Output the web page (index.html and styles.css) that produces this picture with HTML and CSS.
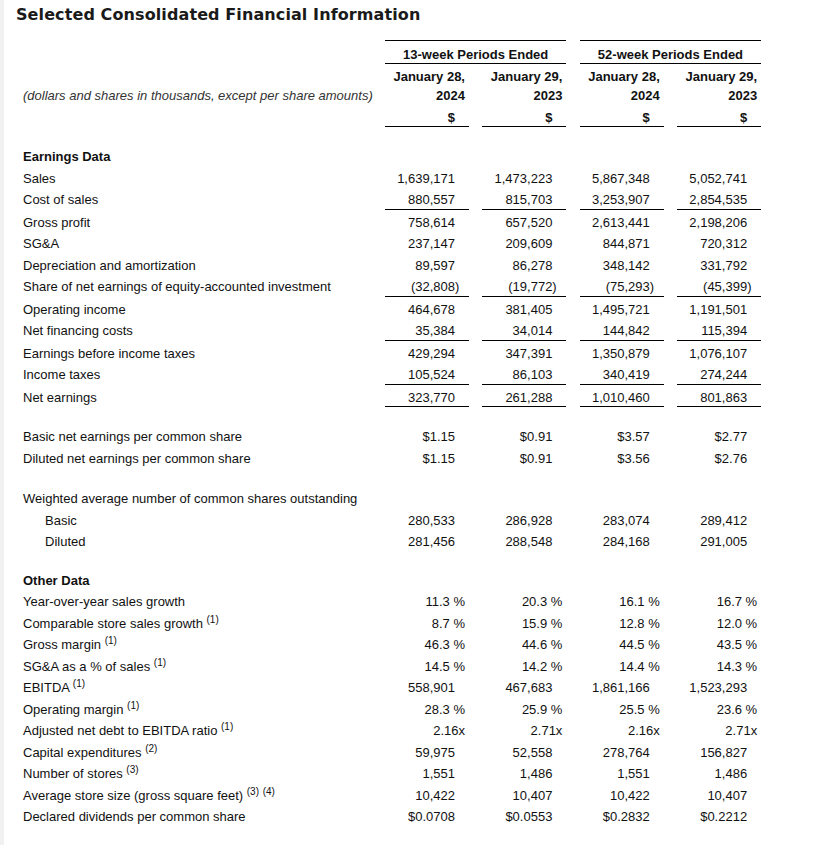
FILE: index.html
```html
<!DOCTYPE html>
<html lang="en">
<head>
<meta charset="utf-8">
<title>Selected Consolidated Financial Information</title>
<link rel="stylesheet" href="styles.css">
</head>
<body>
<div class="page">
  <h1 class="title">Selected Consolidated Financial Information</h1>
  <div class="fin">
    <div class="row head-a">
      <div class="lbl"></div>
      <div class="group g1">13-week Periods Ended</div>
      <div class="group g2">52-week Periods Ended</div>
    </div>
    <div class="row head-b">
      <div class="lbl"></div>
      <div class="hd">January 28,</div>
      <div class="hd">January 29,</div>
      <div class="hd">January 28,</div>
      <div class="hd">January 29,</div>
    </div>
    <div class="row head-c">
      <div class="lbl note">(dollars and shares in thousands, except per share amounts)</div>
      <div class="hd">2024</div>
      <div class="hd">2023</div>
      <div class="hd">2024</div>
      <div class="hd">2023</div>
    </div>
    <div class="row head-d">
      <div class="lbl"></div>
      <div class="cur">$</div>
      <div class="cur">$</div>
      <div class="cur">$</div>
      <div class="cur">$</div>
    </div>

    <div class="spacer short"></div>

    <div class="row"><div class="lbl sec">Earnings Data</div></div>
    <div class="row"><div class="lbl">Sales</div><div class="v">1,639,171</div><div class="v">1,473,223</div><div class="v">5,867,348</div><div class="v">5,052,741</div></div>
    <div class="row ul"><div class="lbl">Cost of sales</div><div class="v">880,557</div><div class="v">815,703</div><div class="v">3,253,907</div><div class="v">2,854,535</div></div>
    <div class="row"><div class="lbl">Gross profit</div><div class="v">758,614</div><div class="v">657,520</div><div class="v">2,613,441</div><div class="v">2,198,206</div></div>
    <div class="row"><div class="lbl">SG&amp;A</div><div class="v">237,147</div><div class="v">209,609</div><div class="v">844,871</div><div class="v">720,312</div></div>
    <div class="row"><div class="lbl">Depreciation and amortization</div><div class="v">89,597</div><div class="v">86,278</div><div class="v">348,142</div><div class="v">331,792</div></div>
    <div class="row ul"><div class="lbl">Share of net earnings of equity-accounted investment</div><div class="v">(32,808<span class="hang">)</span></div><div class="v">(19,772<span class="hang">)</span></div><div class="v">(75,293<span class="hang">)</span></div><div class="v">(45,399<span class="hang">)</span></div></div>
    <div class="row"><div class="lbl">Operating income</div><div class="v">464,678</div><div class="v">381,405</div><div class="v">1,495,721</div><div class="v">1,191,501</div></div>
    <div class="row ul"><div class="lbl">Net financing costs</div><div class="v">35,384</div><div class="v">34,014</div><div class="v">144,842</div><div class="v">115,394</div></div>
    <div class="row"><div class="lbl">Earnings before income taxes</div><div class="v">429,294</div><div class="v">347,391</div><div class="v">1,350,879</div><div class="v">1,076,107</div></div>
    <div class="row ul"><div class="lbl">Income taxes</div><div class="v">105,524</div><div class="v">86,103</div><div class="v">340,419</div><div class="v">274,244</div></div>
    <div class="row ul"><div class="lbl">Net earnings</div><div class="v">323,770</div><div class="v">261,288</div><div class="v">1,010,460</div><div class="v">801,863</div></div>

    <div class="spacer short"></div>

    <div class="row"><div class="lbl">Basic net earnings per common share</div><div class="v">$1.15</div><div class="v">$0.91</div><div class="v">$3.57</div><div class="v">$2.77</div></div>
    <div class="row"><div class="lbl">Diluted net earnings per common share</div><div class="v">$1.15</div><div class="v">$0.91</div><div class="v">$3.56</div><div class="v">$2.76</div></div>

    <div class="spacer"></div>

    <div class="row"><div class="lbl wide">Weighted average number of common shares outstanding</div></div>
    <div class="row"><div class="lbl ind">Basic</div><div class="v">280,533</div><div class="v">286,928</div><div class="v">283,074</div><div class="v">289,412</div></div>
    <div class="row"><div class="lbl ind">Diluted</div><div class="v">281,456</div><div class="v">288,548</div><div class="v">284,168</div><div class="v">291,005</div></div>

    <div class="spacer short"></div>

    <div class="row"><div class="lbl sec">Other Data</div></div>
    <div class="row"><div class="lbl">Year-over-year sales growth</div><div class="v pct">11.3 %</div><div class="v pct">20.3 %</div><div class="v pct">16.1 %</div><div class="v pct">16.7 %</div></div>
    <div class="row"><div class="lbl">Comparable store sales growth <sup>(1)</sup></div><div class="v pct">8.7 %</div><div class="v pct">15.9 %</div><div class="v pct">12.8 %</div><div class="v pct">12.0 %</div></div>
    <div class="row"><div class="lbl">Gross margin <sup>(1)</sup></div><div class="v pct">46.3 %</div><div class="v pct">44.6 %</div><div class="v pct">44.5 %</div><div class="v pct">43.5 %</div></div>
    <div class="row"><div class="lbl">SG&amp;A as a % of sales <sup>(1)</sup></div><div class="v pct">14.5 %</div><div class="v pct">14.2 %</div><div class="v pct">14.4 %</div><div class="v pct">14.3 %</div></div>
    <div class="row"><div class="lbl">EBITDA <sup>(1)</sup></div><div class="v">558,901</div><div class="v">467,683</div><div class="v">1,861,166</div><div class="v">1,523,293</div></div>
    <div class="row"><div class="lbl">Operating margin <sup>(1)</sup></div><div class="v pct">28.3 %</div><div class="v pct">25.9 %</div><div class="v pct">25.5 %</div><div class="v pct">23.6 %</div></div>
    <div class="row"><div class="lbl">Adjusted net debt to EBITDA ratio <sup>(1)</sup></div><div class="v pct">2.16x</div><div class="v pct">2.71x</div><div class="v pct">2.16x</div><div class="v pct">2.71x</div></div>
    <div class="row"><div class="lbl">Capital expenditures <sup>(2)</sup></div><div class="v">59,975</div><div class="v">52,558</div><div class="v">278,764</div><div class="v">156,827</div></div>
    <div class="row"><div class="lbl">Number of stores <sup>(3)</sup></div><div class="v">1,551</div><div class="v">1,486</div><div class="v">1,551</div><div class="v">1,486</div></div>
    <div class="row"><div class="lbl">Average store size (gross square feet) <sup>(3)</sup> <sup>(4)</sup></div><div class="v">10,422</div><div class="v">10,407</div><div class="v">10,422</div><div class="v">10,407</div></div>
    <div class="row"><div class="lbl">Declared dividends per common share</div><div class="v">$0.0708</div><div class="v">$0.0553</div><div class="v">$0.2832</div><div class="v">$0.2212</div></div>
  </div>
</div>
</body>
</html>
```

FILE: styles.css
```css
* { box-sizing: content-box; }

html, body {
  margin: 0;
  padding: 0;
  background: #fff;
}

body {
  font-family: "Liberation Sans", Arial, sans-serif;
  font-size: 13px;
  color: #111;
}

.page {
  border-left: 4px solid #f1f1f1;
  padding: 5px 0 0 12px;
  min-height: 840px;
}

.title {
  margin: 0 0 15px 0;
  font-family: "DejaVu Sans", Verdana, sans-serif;
  font-weight: bold;
  font-size: 16px;
  letter-spacing: 0.1px;
  line-height: 20px;
  color: #1a1a1a;
}

.fin {
  margin-left: 7px;
  width: 740px;
}

.row {
  display: grid;
  grid-template-columns: 348.6px 84px 84px 84px 84px;
  column-gap: 13.4px;
}

.row > div {
  line-height: 15px;
  padding-top: 5px;
  padding-bottom: 1.5px;
  white-space: nowrap;
}

.lbl { text-align: left; }
.lbl.sec { font-weight: bold; }
.lbl.ind { padding-left: 22px; }
.lbl.wide { grid-column: 1 / span 5; }
.lbl.note { font-style: italic; color: #333; }

.v {
  text-align: right;
  padding-right: 14px;
}
.v.pct { padding-right: 4px; }
.hang { margin-right: -0.333em; }

.row.ul > .v { border-bottom: 1px solid #000; }

sup {
  font-size: 10px;
  line-height: 0;
  vertical-align: 5px;
}

/* header */
.head-a > div { padding-top: 6px; padding-bottom: 1px; }
.group {
  text-align: center;
  font-weight: bold;
  border-top: 1px solid #000;
  border-bottom: 1px solid #000;
}
.g1 { grid-column: 2 / span 2; }
.g2 { grid-column: 4 / span 2; }

.head-b > div { padding-top: 5px; padding-bottom: 0; }
.head-c > div { padding-top: 4px; padding-bottom: 0; }
.head-d > div { padding-top: 7px; padding-bottom: 1px; }

.hd {
  text-align: right;
  font-weight: bold;
  padding-right: 4px;
}
.cur {
  text-align: right;
  font-weight: bold;
  padding-right: 14px;
  border-bottom: 1px solid #000;
}

.spacer { height: 19px; }
.spacer.short { height: 17px; }
```
